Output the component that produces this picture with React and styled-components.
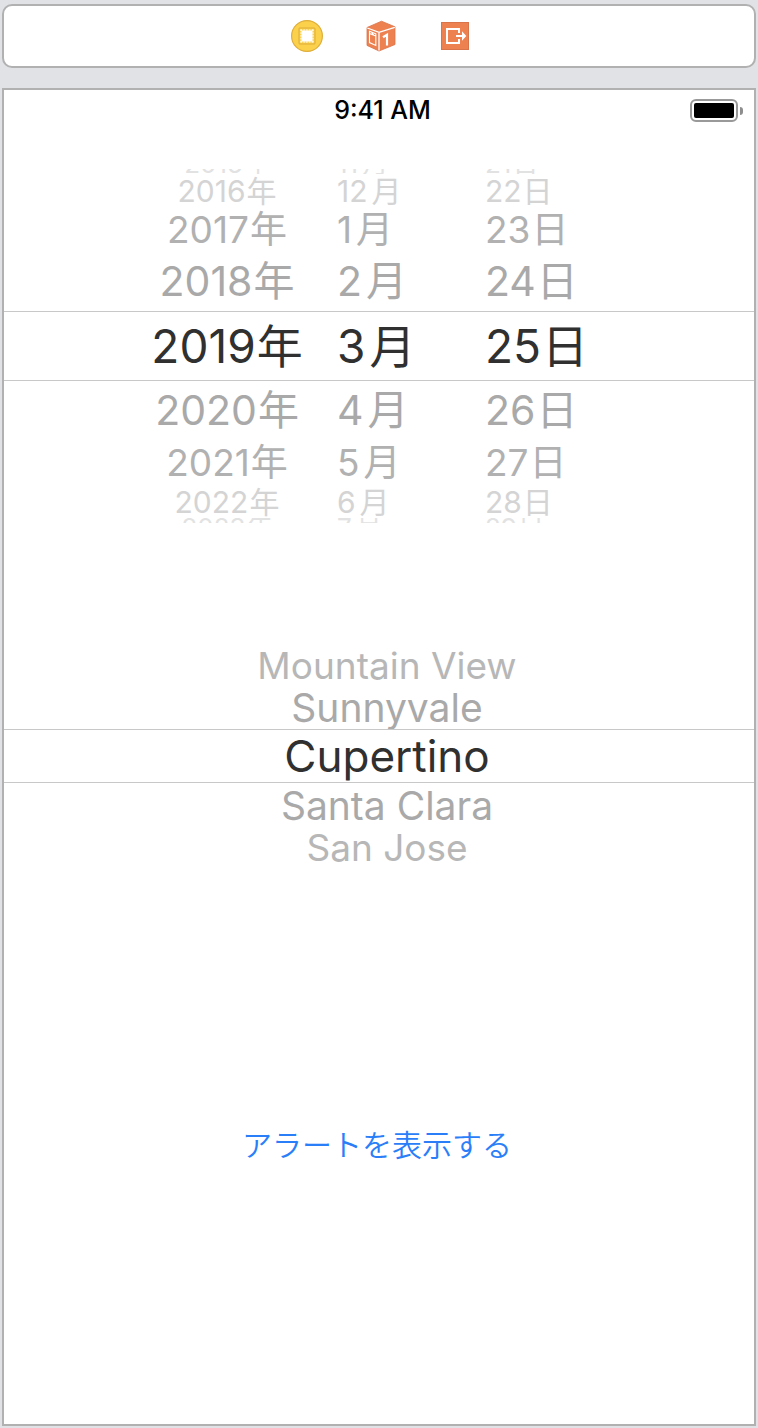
import React, { useState } from "react";
import styled, { createGlobalStyle } from "styled-components";

const GlobalStyle = createGlobalStyle`
  *, *::before, *::after { box-sizing: border-box; }
  body {
    margin: 0;
    background: #e1e2e6;
    font-family: Inter, "Noto Sans CJK JP", sans-serif;
  }
`;

const Page = styled.div`
  display: flex;
  flex-direction: column;
  gap: 20px;
  min-height: 100vh;
  padding: 4px 2px 2px;
`;

const SceneDock = styled.nav`
  display: flex;
  align-items: center;
  justify-content: center;
  gap: 42px;
  height: 64px;
  padding-left: 4px;
  background: #fff;
  border: 2px solid #b1b1b1;
  border-radius: 10px;
`;

const DockButton = styled.button`
  display: flex;
  padding: 0;
  border: 0;
  background: none;
`;

const Device = styled.main`
  display: flex;
  flex: 1;
  flex-direction: column;
  background: #fff;
  border: 2px solid #b1b1b1;
`;

const StatusBar = styled.header`
  display: grid;
  grid-template-columns: 1fr auto 1fr;
  align-items: center;
  height: 41px;
  padding: 0 11px 0 18px;
`;

const Clock = styled.time`
  grid-column: 2;
  font-size: 25px;
  font-weight: 500;
  line-height: 29px;
  color: #000;
`;

const Battery = styled.div`
  display: flex;
  align-items: center;
  justify-self: end;
  gap: 2px;

  &::after {
    content: "";
    width: 3px;
    height: 8px;
    background: #8e8e8e;
    border-radius: 0 4px 4px 0;
  }
`;

const BatteryShell = styled.div`
  width: 48px;
  height: 23px;
  padding: 2px;
  border: 2px solid #999;
  border-radius: 6px;
`;

const BatteryLevel = styled.div`
  height: 100%;
  background: #000;
  border-radius: 2px;
`;

const Picker = styled.div`
  position: relative;
  display: flex;
  justify-content: center;
  margin-top: ${(p) => p.$top}px;
  padding-left: ${(p) => p.$indent}px;
`;

const SelectionBand = styled.div`
  position: absolute;
  inset: 50% 0 auto;
  height: ${(p) => p.$height}px;
  margin-top: ${(p) => p.$height / -2}px;
  border: solid #c8c8c8;
  border-width: 1px 0;
  pointer-events: none;
`;

const Wheel = styled.fieldset`
  display: flex;
  flex-direction: column;
  width: ${(p) => p.$width}px;
  min-width: 0;
  margin: 0;
  padding: 0;
  border: 0;
`;

const rowStyles = {
  center: { height: 70, size: 46, color: "#303030" },
  near: { height: 59, size: 41, color: "#a9a9a9" },
  mid: { height: 45, size: 37, color: "#b1b1b1" },
  far: { height: 33, size: 30, color: "#d4d4d4" },
  top: { height: 5, size: 26, color: "#e2e2e2", place: "flex-end" },
  bottom: { height: 5, size: 26, color: "#e2e2e2", place: "flex-start" },
  cityCenter: { height: 54, size: 44, color: "#303030" },
  cityNear: { height: 44, size: 39, color: "#a9a9a9" },
  cityMid: { height: 40, size: 37, color: "#b7b7b7" },
};

const Option = styled.label`
  display: flex;
  align-items: ${(p) => rowStyles[p.$row].place || "center"};
  justify-content: ${(p) => p.$align};
  height: ${(p) => rowStyles[p.$row].height}px;
  overflow: ${(p) => (rowStyles[p.$row].place ? "hidden" : "visible")};
  font-size: ${(p) => rowStyles[p.$row].size}px;
  line-height: ${(p) => (rowStyles[p.$row].place ? "20px" : 1)};
  color: ${(p) => rowStyles[p.$row].color};
  white-space: nowrap;
`;

const Radio = styled.input`
  appearance: none;
  width: 0;
  height: 0;
  margin: 0;
`;

const Unit = styled.span`
  margin-left: ${(p) => p.$gap}px;
`;

const ActionButton = styled.button`
  align-self: center;
  margin: 254px 4px 0 0;
  padding: 0;
  border: 0;
  background: none;
  font-family: "Noto Sans CJK JP", sans-serif;
  font-size: 30px;
  font-weight: 350;
  line-height: 44px;
  color: #2a7ef8;
`;

const dateRows = ["top", "far", "mid", "near", "center", "near", "mid", "far", "bottom"];
const cityRows = ["cityMid", "cityNear", "cityCenter", "cityNear", "cityMid"];

const years = [2015, 2016, 2017, 2018, 2019, 2020, 2021, 2022, 2023];
const months = [11, 12, 1, 2, 3, 4, 5, 6, 7];
const days = [21, 22, 23, 24, 25, 26, 27, 28, 29];
const cities = ["Mountain View", "Sunnyvale", "Cupertino", "Santa Clara", "San Jose"];

function PickerWheel({ name, values, rows, unit, gap, width, align, initial }) {
  const [value, setValue] = useState(initial);
  return (
    <Wheel $width={width} aria-label={name}>
      {values.map((v, i) => (
        <Option key={v} $row={rows[i]} $align={align}>
          <Radio type="radio" name={name} value={v} checked={v === value} onChange={() => setValue(v)} />
          <span>{v}</span>
          {unit && <Unit $gap={gap}>{unit}</Unit>}
        </Option>
      ))}
    </Wheel>
  );
}

function ControllerIcon() {
  return (
    <svg width="32" height="32" viewBox="0 0 32 32" aria-hidden="true">
      <circle cx="16" cy="16" r="15.4" fill="#fbd14b" stroke="#dfae3c" strokeWidth="1.2" />
      <rect x="8" y="8" width="16" height="16" rx="0.6" fill="#fbd14b" stroke="#d9a738" strokeWidth="0.9" />
      <rect x="10.5" y="10.5" width="11" height="11" fill="#fff" />
      <path d="M9.5 10H22.5M9.5 22H22.5M10 9.5V22.5M22 9.5V22.5" fill="none" stroke="#fff" strokeWidth="1" strokeDasharray="1.6 1.2" />
    </svg>
  );
}

function ResponderIcon() {
  return (
    <svg width="32" height="32" viewBox="0 0 32 32" aria-hidden="true">
      <path d="M2 7.5 16.5 1.2 30 6.8V24.5L14 31 2 25.4Z" fill="#ee8150" stroke="#d9734a" strokeWidth="0.8" />
      <path d="M2.3 8 14 12.3 29.8 7.3M14 12.3V30.6" fill="none" stroke="#fff" strokeWidth="1.3" />
      <path d="M4.5 11.2 10.8 13.8V25.5L4.5 22.6ZM4.5 13.4 10.8 16M6.5 12.4 8.6 14.8" fill="none" stroke="#fff" strokeWidth="1.1" />
      <path d="M18 17.2 22 14.8V25.4" fill="none" stroke="#fff" strokeWidth="2.2" />
    </svg>
  );
}

function ExitIcon() {
  return (
    <svg width="32" height="32" viewBox="0 0 32 32" aria-hidden="true">
      <rect x="2.5" y="2.5" width="27" height="27" fill="#ee8150" stroke="#d9734a" strokeWidth="1" />
      <path d="M20 13V9H8v14h12v-4" fill="none" stroke="#fff" strokeWidth="2" />
      <path d="M17 16h7" fill="none" stroke="#fff" strokeWidth="2" />
      <path d="M23 11.3 27.3 16 23 20.7Z" fill="#fff" />
    </svg>
  );
}

export default function App() {
  return (
    <>
      <GlobalStyle />
      <Page>
        <SceneDock aria-label="Scene">
          <DockButton type="button" aria-label="View Controller"><ControllerIcon /></DockButton>
          <DockButton type="button" aria-label="First Responder"><ResponderIcon /></DockButton>
          <DockButton type="button" aria-label="Exit"><ExitIcon /></DockButton>
        </SceneDock>
        <Device>
          <StatusBar>
            <Clock>9:41 AM</Clock>
            <Battery role="img" aria-label="Battery full">
              <BatteryShell><BatteryLevel /></BatteryShell>
            </Battery>
          </StatusBar>
          <Picker $top={38} $indent={0}>
            <PickerWheel name="year" values={years} rows={dateRows} unit="年" gap={1} width={220} align="center" initial={2019} />
            <PickerWheel name="month" values={months} rows={dateRows} unit="月" gap={4} width={148} align="flex-start" initial={3} />
            <PickerWheel name="day" values={days} rows={dateRows} unit="日" gap={1} width={156} align="flex-start" initial={25} />
            <SelectionBand $height={70} />
          </Picker>
          <Picker $top={122} $indent={16}>
            <PickerWheel name="city" values={cities} rows={cityRows} width={300} align="center" initial="Cupertino" />
            <SelectionBand $height={54} />
          </Picker>
          <ActionButton type="button">アラートを表示する</ActionButton>
        </Device>
      </Page>
    </>
  );
}
